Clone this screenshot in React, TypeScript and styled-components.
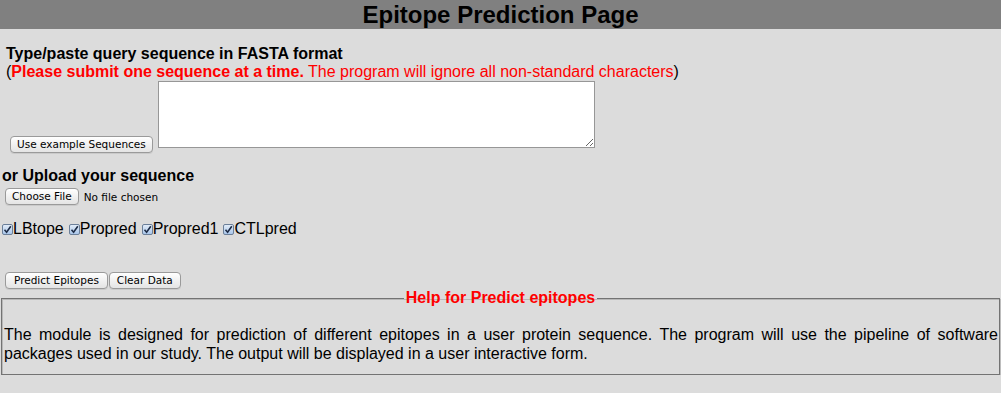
import styled, { createGlobalStyle } from "styled-components";

const GlobalStyle = createGlobalStyle`
	html, body {
		margin: 0;
		padding: 0;
		background: #dcdcdc;
		font-family: "Liberation Sans", Arial, sans-serif;
		color: #000;
	}
`;

const Header = styled.h1`
	margin: 0;
	background: #808080;
	font-size: 24px;
	line-height: 29px;
	font-weight: bold;
	text-align: center;
`;

const Form = styled.div`
	padding: 0;
`;

const Heading = styled.div<{ $top: number; $left: number }>`
	margin: ${(p) => p.$top}px 0 0 ${(p) => p.$left}px;
	font-size: 16px;
	font-weight: bold;
	line-height: 18px;
`;

const Note = styled.div`
	margin-left: 6px;
	font-size: 16px;
	line-height: 18px;
	color: #000;
	strong {
		color: #ff0000;
	}
	span {
		color: #ff0000;
	}
`;

const SequenceRow = styled.div`
	display: flex;
	align-items: flex-end;
	gap: 5px;
	padding-left: 10px;
`;

const MacButton = styled.button<{ $pad?: number }>`
	height: 17px;
	padding: 0 ${(p) => p.$pad ?? 6}px;
	margin: 0;
	border: 1px solid #9a9a9a;
	border-radius: 4px;
	background: linear-gradient(#ffffff, #f1f1f1 50%, #e4e4e4);
	box-shadow: 0 1px 0 rgba(0, 0, 0, 0.08);
	font-family: "DejaVu Sans", "Lucida Grande", sans-serif;
	font-size: 10.5px;
	line-height: 15px;
	color: #000;
	white-space: nowrap;
`;

const SequenceBox = styled.textarea`
	box-sizing: border-box;
	width: 437px;
	height: 67px;
	margin: 0 0 5px;
	border: 1px solid #979797;
	background: #fff;
	resize: both;
`;

const FileRow = styled.div`
	display: flex;
	align-items: center;
	gap: 5px;
	margin: 3px 0 0 5px;
	font-family: "DejaVu Sans", "Lucida Grande", sans-serif;
	font-size: 10.5px;
`;

const Options = styled.div`
	display: flex;
	align-items: center;
	margin: 15px 0 0 2px;
	font-size: 16px;
	line-height: 18px;
`;

const Option = styled.label`
	display: inline-flex;
	align-items: center;
	margin-right: 5px;
`;

const Box = styled.span`
	box-sizing: border-box;
	width: 11px;
	height: 11px;
	border: 1px solid #6b7f99;
	border-radius: 2px;
	background: linear-gradient(#e2ecf8, #a9c6ea);
	display: inline-flex;
	align-items: center;
	justify-content: center;
	margin: 1px 0 0;
	svg {
		display: block;
	}
`;

const ActionRow = styled.div`
	display: flex;
	gap: 1px;
	margin: 34px 0 0 5px;
`;

const HelpBox = styled.fieldset`
	margin: 0 1px;
	padding: 0;
	border: 1px solid #737373;
	box-shadow: inset 1px 1px 0 #b8b8b8, 1px 1px 0 #bdbdbd;
`;

const HelpTitle = styled.legend`
	margin: 0 auto;
	padding: 0 2px;
	color: #ff0000;
	font-size: 16px;
	font-weight: bold;
	line-height: 18px;
`;

const HelpText = styled.p`
	margin: 18px 0 11px 2px;
	padding-right: 1px;
	font-size: 16px;
	line-height: 19px;
	text-align: justify;
`;

const CheckMark = () => (
	<svg width="9" height="9" viewBox="0 0 9 9">
		<path d="M1.5 4.8 L3.6 7.2 L7.8 1.2" fill="none" stroke="#1d2b45" strokeWidth="1.6" />
	</svg>
);

const options = ["LBtope", "Propred", "Propred1", "CTLpred"];

const App = () => {
	return (
		<>
			<GlobalStyle />
			<Header>Epitope Prediction Page</Header>
			<Form>
				<Heading $top={16} $left={6}>
					Type/paste query sequence in FASTA format
				</Heading>
				<Note>
					(<strong>Please submit one sequence at a time.</strong>
					<span> The program will ignore all non-standard characters</span>)
				</Note>
				<SequenceRow>
					<MacButton>Use example Sequences</MacButton>
					<SequenceBox />
				</SequenceRow>
				<Heading $top={14} $left={2}>
					or Upload your sequence
				</Heading>
				<FileRow>
					<MacButton>Choose File</MacButton>
					<span>No file chosen</span>
				</FileRow>
				<Options>
					{options.map((name) => (
						<Option key={name}>
							<Box>
								<CheckMark />
							</Box>
							{name}
						</Option>
					))}
				</Options>
				<ActionRow>
					<MacButton $pad={8}>Predict Epitopes</MacButton>
					<MacButton $pad={7}>Clear Data</MacButton>
				</ActionRow>
				<HelpBox>
					<HelpTitle>Help for Predict epitopes</HelpTitle>
					<HelpText>
						The module is designed for prediction of different epitopes in a user protein sequence. The
						program will use the pipeline of software packages used in our study. The output will be
						displayed in a user interactive form.
					</HelpText>
				</HelpBox>
			</Form>
		</>
	);
};

export default App;
